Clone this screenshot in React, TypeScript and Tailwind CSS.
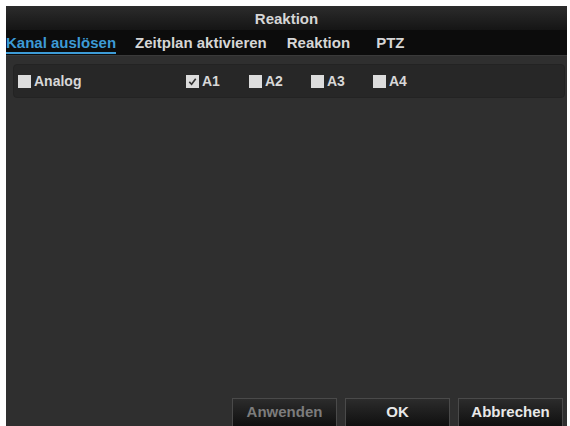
import React from 'react';

const font = { fontFamily: '"Liberation Sans", Arial, sans-serif' };

function Box({ checked }: { checked?: boolean }) {
  return (
    <span className="w-[13px] h-[13px] bg-[#dcdcdc] flex items-center justify-center shrink-0">
      {checked && (
        <svg viewBox="0 0 12 12" className="w-[11px] h-[11px]">
          <path d="M2.5 6.5 L5 9 L9.5 3" fill="none" stroke="#333" strokeWidth={1.8} />
        </svg>
      )}
    </span>
  );
}

function Check({ label, checked }: { label: string; checked?: boolean }) {
  return (
    <div className="flex items-center gap-[3px]">
      <Box checked={checked} />
      <span className="text-[14px] font-bold text-[#d8d8d8]">{label}</span>
    </div>
  );
}

const tabs = [
  { t: 'Kanal auslösen', m: 'mr-[19px]' },
  { t: 'Zeitplan aktivieren', m: 'mr-[20px]' },
  { t: 'Reaktion', m: 'mr-[26px]' },
  { t: 'PTZ', m: '' },
];

export default function App() {
  return (
    <div className="w-[570px] h-[426px] bg-white pt-[6px] pl-[6px] pr-[3px] overflow-hidden" style={font}>
      <div className="h-full flex flex-col bg-[#2f2f2f]">
        {/* Title */}
        <div className="h-[24px] flex items-center justify-center bg-gradient-to-b from-[#2c2c2c] to-[#151515] text-[15px] font-bold text-[#d6d6d6] pt-[2px]">
          Reaktion
        </div>

        {/* Tabs */}
        <div className="h-[26px] flex items-end bg-[#0c0c0c] border-b border-[#3a3a3a] pb-[1px]">
          {tabs.map((tab, i) => (
            <div
              key={tab.t}
              className={
                (i === 0
                  ? 'text-[#3d9bd6] border-[#3d9bd6] '
                  : 'text-[#d6d6d6] border-transparent ') +
                'text-[15px] font-bold leading-[18px] border-b-2 ' +
                tab.m
              }
            >
              {tab.t}
            </div>
          ))}
        </div>

        {/* Content */}
        <div className="flex-1 flex flex-col pl-[7px] pr-[2px] pt-[8px]">
          <div className="h-[34px] flex items-center rounded-[4px] bg-[#272727] border border-[#232323] pl-[4px]">
            <div className="w-[168px]">
              <Check label="Analog" />
            </div>
            <div className="flex items-center">
              <div className="w-[63px]"><Check label="A1" checked /></div>
              <div className="w-[62px]"><Check label="A2" /></div>
              <div className="w-[62px]"><Check label="A3" /></div>
              <Check label="A4" />
            </div>
          </div>

          <div className="flex-1" />

          <div className="flex justify-end gap-[8px] pr-[2px]">
            {['Anwenden', 'OK', 'Abbrechen'].map((b, i) => (
              <div
                key={b}
                className={
                  'w-[105px] h-[28px] flex items-center justify-center text-[15px] font-bold border-t border-x border-[#4a4a4a] bg-gradient-to-b from-[#2c2c2c] to-[#101010] ' +
                  (i === 0 ? 'text-[#7c7c7c]' : 'text-[#e8e8e8]')
                }
              >
                {b}
              </div>
            ))}
          </div>
        </div>
      </div>
    </div>
  );
}
